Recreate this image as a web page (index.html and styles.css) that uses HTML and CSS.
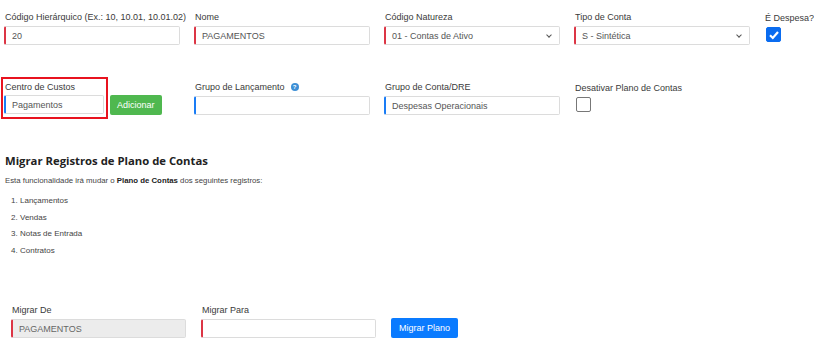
FILE: index.html
```html
<!DOCTYPE html>
<html lang="pt-BR">
<head>
    <meta charset="UTF-8">
    <meta name="viewport" content="width=device-width, initial-scale=1.0">
    <title>Plano de Contas</title>
    <link rel="stylesheet" href="styles.css">
</head>
<body>
    <div class="form-row first-row">
        <div class="field">
            <label>Código Hierárquico (Ex.: 10, 10.01, 10.01.02)</label>
            <input type="text" class="input required" value="20">
        </div>
        <div class="field">
            <label>Nome</label>
            <input type="text" class="input required" value="PAGAMENTOS">
        </div>
        <div class="field">
            <label>Código Natureza</label>
            <div class="select required">01 - Contas de Ativo <span class="caret"></span></div>
        </div>
        <div class="field">
            <label>Tipo de Conta</label>
            <div class="select required">S - Sintética <span class="caret"></span></div>
        </div>
        <div class="field check-field">
            <label>É Despesa?</label>
            <span class="checkbox checked">
                <svg width="12" height="12" viewBox="0 0 12 12"><path d="M2 6.3 L4.8 9 L10 3" fill="none" stroke="#fff" stroke-width="2.2"/></svg>
            </span>
        </div>
    </div>

    <div class="form-row second-row">
        <div class="field cost-field">
            <div class="highlight">
                <label>Centro de Custos</label>
                <input type="text" class="input info short" value="Pagamentos">
            </div>
            <button class="btn btn-green">Adicionar</button>
        </div>
        <div class="field">
            <label>Grupo de Lançamento <span class="help">?</span></label>
            <input type="text" class="input info" value="">
        </div>
        <div class="field">
            <label>Grupo de Conta/DRE</label>
            <input type="text" class="input info" value="Despesas Operacionais">
        </div>
        <div class="field">
            <label>Desativar Plano de Contas</label>
            <span class="checkbox"></span>
        </div>
    </div>

    <div class="migrate">
        <h2>Migrar Registros de Plano de Contas</h2>
        <p>Esta funcionalidade irá mudar o <b>Plano de Contas</b> dos seguintes registros:</p>
        <ol>
            <li>Lançamentos</li>
            <li>Vendas</li>
            <li>Notas de Entrada</li>
            <li>Contratos</li>
        </ol>

        <div class="form-row migrate-row">
            <div class="field">
                <label>Migrar De</label>
                <input type="text" class="input required disabled" value="PAGAMENTOS" disabled>
            </div>
            <div class="field">
                <label>Migrar Para</label>
                <input type="text" class="input required" value="">
            </div>
            <button class="btn btn-blue">Migrar Plano</button>
        </div>
    </div>
</body>
</html>
```

FILE: styles.css
```css
body {
    margin: 0;
    padding: 0 0 0 4px;
    background: #fff;
    font-family: 'Liberation Sans', Arial, sans-serif;
    font-size: 9px;
    color: #444;
}

.form-row {
    display: flex;
    align-items: flex-end;
}

.first-row {
    padding-top: 12px;
}

.second-row {
    padding-top: 32px;
}

.field {
    display: flex;
    flex-direction: column;
    width: 176px;
    margin-right: 14px;
}

.field label {
    display: flex;
    align-items: center;
    height: 10px;
    margin: 0 0 4px 1px;
    color: #3a3a3a;
    white-space: nowrap;
}

.input,
.select {
    box-sizing: border-box;
    width: 100%;
    height: 19px;
    padding: 0 6px;
    border: 1px solid #dcdcdc;
    border-radius: 2px;
    font-family: inherit;
    font-size: 9px;
    color: #555;
    background: #fff;
}

.select {
    display: flex;
    align-items: center;
    justify-content: space-between;
}

.caret {
    width: 3px;
    height: 3px;
    margin-right: 2px;
    margin-top: -2px;
    border-right: 1.3px solid #555;
    border-bottom: 1.3px solid #555;
    transform: rotate(45deg);
}

.required {
    border-left: 2px solid #dc3545;
}

.info {
    border-left: 2px solid #1a7cf5;
}

.disabled {
    background: #ececec;
    color: #666;
}

.check-field {
    width: 50px;
    margin-right: 0;
}

.checkbox {
    box-sizing: border-box;
    display: flex;
    align-items: center;
    justify-content: center;
    width: 15px;
    height: 15px;
    margin: 0 0 3px 2px;
    border: 1px solid #777;
    border-radius: 2px;
    background: #fff;
}

.checkbox.checked {
    border-color: #0a6cf0;
    background: #0a6cf0;
}

.cost-field {
    flex-direction: row;
    align-items: flex-end;
}

.highlight {
    display: flex;
    flex-direction: column;
    width: 100px;
    margin: 0 0 -4px -3px;
    padding: 3px 2px 3px 1px;
    border: 2px solid #e8131f;
}

.highlight label {
    margin-bottom: 3px;
}

.btn {
    height: 20px;
    padding: 0 7px;
    border: none;
    border-radius: 2px;
    font-family: inherit;
    font-size: 9px;
    color: #fff;
    cursor: pointer;
}

.btn-green {
    margin-left: 2px;
    background: #4fb84f;
}

.btn-blue {
    background: #0a7bff;
}

.help {
    display: inline-flex;
    align-items: center;
    justify-content: center;
    width: 8px;
    height: 8px;
    margin-left: 6px;
    border-radius: 50%;
    background: #3d8fd6;
    color: #fff;
    font-size: 6px;
    font-weight: bold;
}

.migrate h2 {
    margin: 38px 0 0 1px;
    font-family: 'Open Sans', sans-serif;
    font-size: 11.3px;
    font-weight: 700;
    color: #222;
}

.migrate p {
    margin: 8px 0 0 1px;
    font-size: 7.8px;
}

.migrate p b {
    font-weight: bold;
    color: #222;
}

.migrate ol {
    margin: 8px 0 0;
    padding-left: 16px;
    font-size: 8px;
}

.migrate li {
    line-height: 16.5px;
}

.migrate-row {
    padding: 46px 0 0 7px;
}

.migrate-row .field {
    width: 175px;
    margin-right: 15px;
}

.migrate-row .btn-blue {
    padding: 0 8px;
}
```
